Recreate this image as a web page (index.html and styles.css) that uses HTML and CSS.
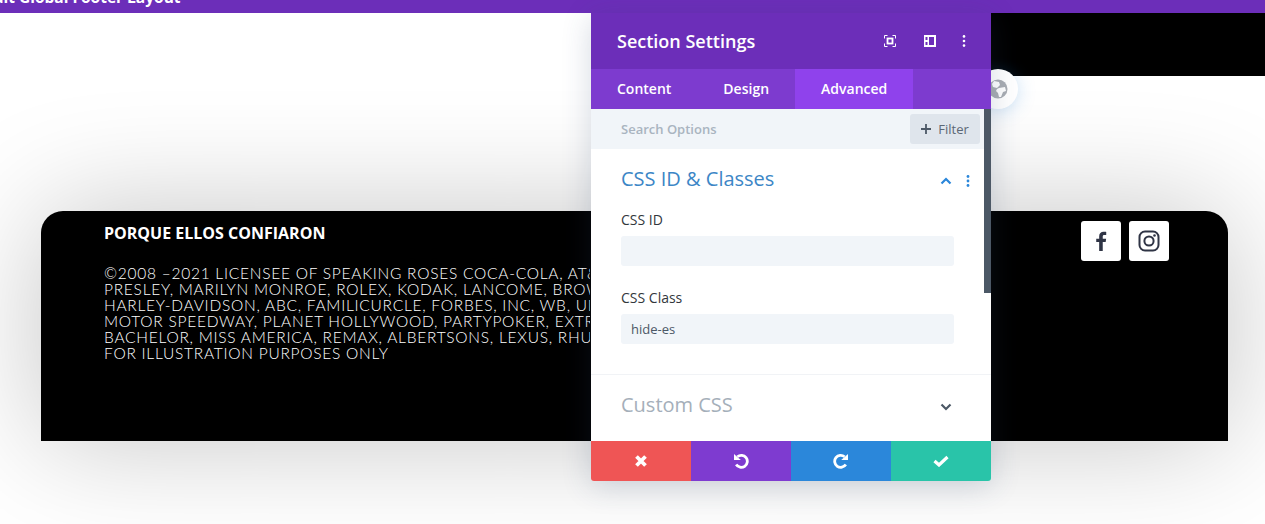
FILE: index.html
```html
<!DOCTYPE html>
<html lang="es">
<head>
<meta charset="utf-8">
<title>Section Settings</title>
<link rel="stylesheet" href="styles.css">
</head>
<body>
<header class="topbar"><span class="topbar-title">Edit Global Footer Layout</span></header>
<div class="hero-strip"></div>
<footer class="card">
  <div class="card-text">
    <h2 class="card-heading">PORQUE ELLOS CONFIARON</h2>
    <p class="legal">©2008 –2021 LICENSEE OF SPEAKING ROSES COCA-COLA, AT&amp;T<br>PRESLEY, MARILYN MONROE, ROLEX, KODAK, LANCOME, BROWN<br>HARLEY-DAVIDSON, ABC, FAMILICURCLE, FORBES, INC, WB, UNIV<br>MOTOR SPEEDWAY, PLANET HOLLYWOOD, PARTYPOKER, EXTRA<br>BACHELOR, MISS AMERICA, REMAX, ALBERTSONS, LEXUS, RHU,<br>FOR ILLUSTRATION PURPOSES ONLY</p>
  </div>
  <div class="social">
    <a class="social-btn" aria-label="Facebook"><svg width="22" height="22" viewBox="0 0 24 24"><path fill="#2f3445" d="M13.900 23v-9.800h3.200l.5-3.700h-3.700V7.200c0-1.100.3-1.800 1.800-1.800h2V2.100c-.4 0-1.500-.1-2.900-.1-2.800 0-4.800 1.700-4.800 4.900v2.600H6.800v3.700H10V23z"/></svg></a>
    <a class="social-btn" aria-label="Instagram"><svg width="24" height="24" viewBox="0 0 24 24" fill="none" stroke="#2f3445" stroke-width="2"><rect x="2.500" y="2.500" width="19" height="19" rx="5.500"/><circle cx="12" cy="12" r="4.600"/><circle cx="17.500" cy="6.500" r="1.300" fill="#2f3445" stroke="none"/></svg></a>
  </div>
</footer>

<div class="globe-btn"><svg width="20" height="20" viewBox="0 0 20 20"><circle cx="10" cy="10" r="9.500" fill="#a9adb3"/><path fill="#fff" d="M6 2l5 1 1 3-3 3-4-1-1-3zM11 9l6-1 1 4-3 1-2 5-2 0-1-4-2-2 1-2z"/></svg></div>

<section class="panel">
  <div class="panel-head">
    <h1 class="panel-title">Section Settings</h1>
    <div class="panel-actions">
      <svg class="icon-focus" width="12" height="12" viewBox="0 0 12 12" fill="none" stroke="#fff" stroke-width="1"><path d="M.5 3.500v-3h3M8.500.5h3v3M11.500 8.500v3h-3M3.500 11.500h-3v-3"/><rect x="3.500" y="3.500" width="5" height="5" stroke-width="1.800"/></svg>
      <svg width="12" height="12" viewBox="0 0 12 12"><path fill="#fff" fill-rule="evenodd" d="M0 0h12v12H0zM5 2v8h5V2zM1.500 2v3h2V2zm0 5v3h2V7z"/></svg>
      <svg width="4" height="12" viewBox="0 0 4 12" fill="#fff"><circle cx="2" cy="1.400" r="1.300"/><circle cx="2" cy="6" r="1.300"/><circle cx="2" cy="10.600" r="1.300"/></svg>
    </div>
  </div>
  <nav class="tabs">
    <span class="tab">Content</span>
    <span class="tab">Design</span>
    <span class="tab tab-active">Advanced</span>
  </nav>
  <div class="search">
    <span class="search-label">Search Options</span>
    <span class="filter"><svg width="10" height="10" viewBox="0 0 10 10"><path fill="#4c5866" d="M4.100 0h1.800v4.100H10v1.800H5.900V10H4.100V5.900H0V4.100h4.100z"/></svg>Filter</span>
  </div>
  <div class="scrollbar"></div>
  <div class="panel-body">
    <div class="group">
      <div class="group-head">
        <h3 class="group-title">CSS ID &amp; Classes</h3>
        <svg class="chev" width="12" height="8" viewBox="0 0 12 8" fill="none" stroke="#2b87da" stroke-width="2.200"><path d="M1.500 6.500L6 2l4.500 4.500"/></svg>
        <svg class="dots" width="4" height="12" viewBox="0 0 4 12" fill="#2b87da"><circle cx="2" cy="1.500" r="1.400"/><circle cx="2" cy="6" r="1.400"/><circle cx="2" cy="10.500" r="1.400"/></svg>
      </div>
      <label class="field-label">CSS ID</label>
      <div class="field"></div>
      <label class="field-label field-label-next">CSS Class</label>
      <div class="field">hide-es</div>
    </div>
    <div class="group-closed">
      <h3 class="group-title group-title-muted">Custom CSS</h3>
      <svg class="chev-down" width="12" height="8" viewBox="0 0 12 8" fill="none" stroke="#4c5866" stroke-width="2.200"><path d="M1.500 1.500L6 6l4.500-4.500"/></svg>
    </div>
  </div>
  <div class="panel-foot">
    <span class="foot-btn foot-cancel"><svg width="14" height="14" viewBox="0 0 14 14"><path fill="none" stroke="#fff" stroke-width="3.800" d="M2.500 2.500l9 9M11.500 2.500l-9 9"/></svg></span>
    <span class="foot-btn foot-undo"><svg width="16" height="16" viewBox="0 0 16 16" fill="none"><path stroke="#fff" stroke-width="2.800" d="M4.400 3.800A6 6 0 1 1 3.200 11.500"/><path fill="#fff" d="M1 1l6.800 6H1z"/></svg></span>
    <span class="foot-btn foot-redo"><svg width="16" height="16" viewBox="0 0 16 16" fill="none"><path stroke="#fff" stroke-width="2.800" d="M11.600 3.800A6 6 0 1 0 12.800 11.500"/><path fill="#fff" d="M15 1L8.200 7H15z"/></svg></span>
    <span class="foot-btn foot-save"><svg width="16" height="12" viewBox="0 0 16 12"><path fill="none" stroke="#fff" stroke-width="3.200" d="M1.500 6l4.500 4L14.500 2"/></svg></span>
  </div>
</section>
</body>
</html>
```
FILE: styles.css
```css
* { box-sizing: border-box; }
html, body { margin: 0; height: 524px; overflow: hidden; }
body {
  background: #fff;
  font-family: "Open Sans", sans-serif;
  position: relative;
}
.topbar {
  height: 13px;
  background: #6c2eb9;
  overflow: hidden;
  position: relative;
  z-index: 2;
}
.topbar-title {
  display: block;
  margin: -13px 0 0 -15px;
  color: #fff;
  font-size: 15.500px;
  font-weight: 700;
  line-height: 20px;
  white-space: nowrap;
}
.hero-strip {
  width: 274px;
  height: 63px;
  margin-left: auto;
  background: #000;
}
.card {
  position: relative;
  height: 230px;
  margin: 135px 37px 0 41px;
  padding: 10px 59px 0 63px;
  background: #000;
  border-radius: 22px 22px 0 0;
  box-shadow: 0 0 120px rgba(0, 0, 0, .23);
  display: flex;
  justify-content: space-between;
  align-items: flex-start;
}
.card-text { width: 486px; overflow: hidden; }
.card-heading {
  margin: 0;
  color: #fff;
  font-size: 16px;
  font-weight: 700;
  line-height: 24px;
}
.legal {
  margin: 20px 0 0;
  color: #fff;
  font-family: "Lato", sans-serif;
  font-weight: 300;
  font-size: 15.500px;
  line-height: 16px;
  letter-spacing: .75px;
  white-space: nowrap;
}
.social { display: flex; gap: 8px; }
.social-btn {
  width: 40px;
  height: 40px;
  background: #fff;
  border-radius: 3px;
  display: flex;
  align-items: center;
  justify-content: center;
}
.globe-btn {
  position: absolute;
  left: 978px;
  top: 69px;
  width: 40px;
  height: 40px;
  border-radius: 50%;
  background: #fff;
  box-shadow: 0 2px 18px rgba(43, 135, 218, .25);
  display: flex;
  align-items: center;
  justify-content: center;
}
.panel {
  position: absolute;
  left: 591px;
  top: 13px;
  width: 400px;
  height: 468px;
  z-index: 3;
  display: flex;
  flex-direction: column;
  border-radius: 3px;
  box-shadow: 0 5px 30px rgba(43, 70, 110, .2);
}
.panel-head {
  height: 56px;
  flex: none;
  background: #6c2eb9;
  padding: 0 25px 0 26px;
  display: flex;
  align-items: center;
  justify-content: space-between;
}
.panel-title {
  margin: 0;
  color: #fff;
  font-size: 18px;
  font-weight: 600;
}
.panel-actions { display: flex; gap: 26px; }
.icon-focus { margin-right: 2px; }
.tabs {
  height: 40px;
  flex: none;
  display: flex;
  background: #7d3bcf;
}
.tab {
  padding: 0 26px;
  color: #fff;
  font-size: 14px;
  font-weight: 600;
  line-height: 40px;
}
.tab-active { background: #8f42ec; }
.search {
  height: 40px;
  flex: none;
  background: #f1f5f9;
  padding: 0 11px 0 30px;
  display: flex;
  align-items: center;
  justify-content: space-between;
}
.search-label { color: #a9b4c0; font-size: 13px; font-weight: 600; }
.filter {
  width: 70px;
  height: 30px;
  background: #dfe5ec;
  border-radius: 3px;
  color: #5c6875;
  font-size: 13px;
  font-weight: 500;
  display: flex;
  align-items: center;
  justify-content: center;
  gap: 7px;
}
.panel-body {
  flex: 1;
  background: #fff;
  overflow: hidden;
}
.scrollbar {
  position: absolute;
  top: 96px;
  right: 0;
  width: 7px;
  height: 184px;
  background: #4c5866;
}
.group {
  height: 226px;
  padding: 16px 37px 0 30px;
  border-bottom: 1px solid #f1f3f6;
}
.group-head {
  display: flex;
  align-items: center;
  height: 28px;
  margin-bottom: 17px;
  position: relative;
}
.group-title {
  margin: 0;
  color: #3c86c6;
  font-size: 20px;
  font-weight: 400;
  line-height: 28px;
}
.group-title-muted { color: #a5afba; }
.chev { position: absolute; left: 319px; top: 12px; }
.dots { position: absolute; left: 345px; top: 10px; }
.field-label {
  display: block;
  color: #32373c;
  font-size: 14px;
  font-weight: 500;
  line-height: 20px;
  margin-bottom: 6px;
}
.field-label-next { margin-top: 22px; }
.field {
  height: 30px;
  background: #f1f5f9;
  border-radius: 3px;
  color: #4c5866;
  font-size: 13px;
  font-weight: 500;
  line-height: 30px;
  padding-left: 10px;
}
.group-closed {
  padding: 16px 0 0 30px;
  position: relative;
}
.chev-down { position: absolute; left: 349px; top: 28px; }
.panel-foot {
  height: 40px;
  flex: none;
  display: flex;
  border-radius: 0 0 3px 3px;
  overflow: hidden;
}
.foot-btn {
  flex: 1;
  display: flex;
  align-items: center;
  justify-content: center;
}
.foot-cancel { background: #ef5555; }
.foot-undo { background: #7e3bd0; }
.foot-redo { background: #2b87da; }
.foot-save { background: #29c4a9; }
```
